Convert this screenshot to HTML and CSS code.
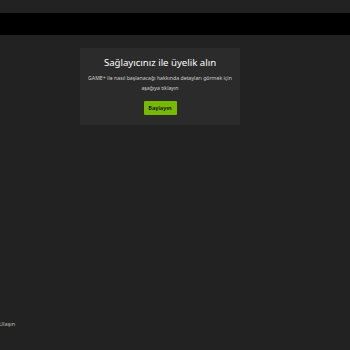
FILE: index.html
```html
<!DOCTYPE html>
<html>
<head>
    <title>GAME+</title>
    <link rel="stylesheet" href="styles.css">
</head>
<body>
    <div class="topbar"></div>
    <main class="content">
        <div class="card">
            <h1>Sağlayıcınız ile üyelik alın</h1>
            <p>GAME+ ile nasıl başlanacağı hakkında detayları görmek için aşağıya tıklayın</p>
            <button type="button">Başlayın</button>
        </div>
    </main>
    <footer class="footer">
        <a href="#">Ulaşın</a>
    </footer>
</body>
</html>
```

FILE: styles.css
```css
html, body {
    height: 100%;
}
body {
    margin: 0;
    background: #222222;
    font-family: "Noto Sans", "Liberation Sans", sans-serif;
    color: #fff;
    display: flex;
    flex-direction: column;
}
.topbar {
    height: 22px;
    margin-top: 13px;
    background: #000;
}
.content {
    flex: 1;
    display: flex;
    justify-content: center;
    padding: 13px 30px 0 0;
}
.card {
    width: 160px;
    height: 77px;
    box-sizing: border-box;
    background: #2b2b2b;
    text-align: center;
    padding: 8px 6px 0;
}
.card h1 {
    margin: 0;
    font-size: 9.6px;
    font-weight: 400;
    line-height: 13px;
}
.card p {
    margin: 4px 0 0;
    font-size: 5.2px;
    line-height: 10px;
    color: #cfcfcf;
}
.card button {
    margin-top: 8px;
    background: #76b900;
    color: #1a1a1a;
    border: none;
    border-radius: 1px;
    font-family: inherit;
    font-size: 5.6px;
    font-weight: bold;
    width: 33px;
    height: 14px;
    padding: 0;
}
.footer {
    height: 30px;
    font-size: 5.6px;
}
.footer a {
    color: #bdbdbd;
    text-decoration: none;
    margin-left: -1px;
}
```
